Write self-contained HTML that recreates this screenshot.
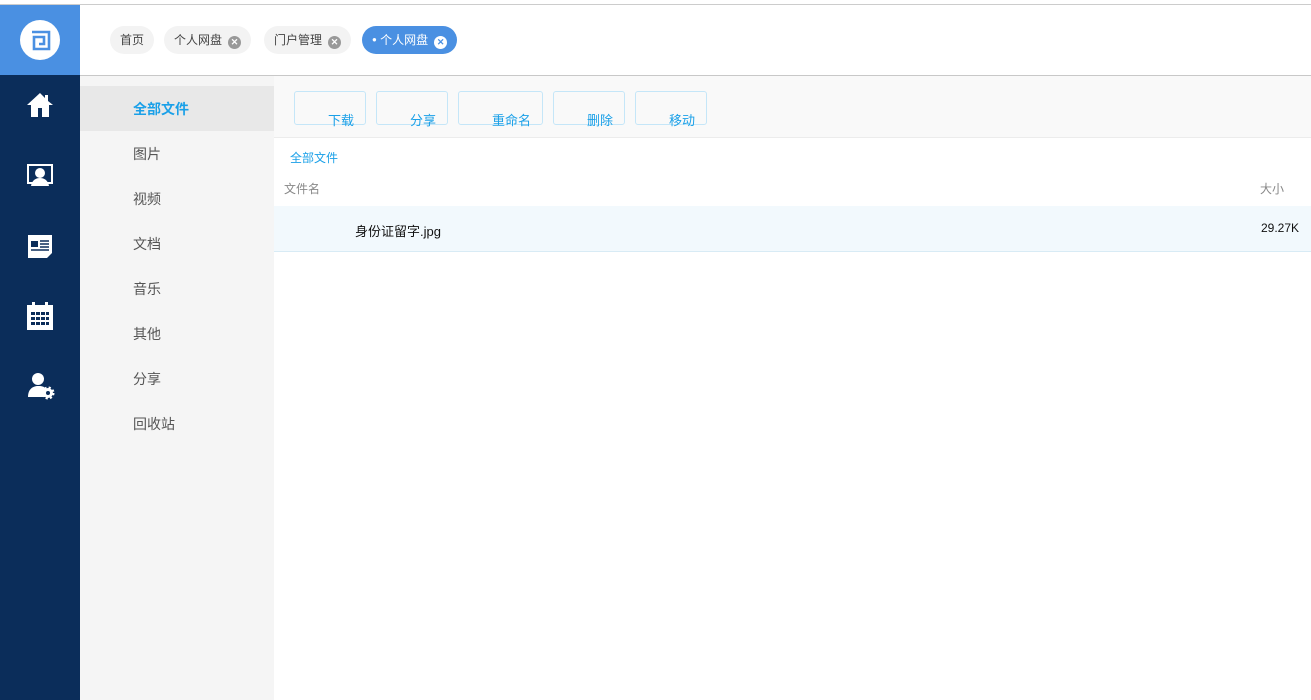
<!DOCTYPE html>
<html><head><meta charset="utf-8"><style>
*{margin:0;padding:0;box-sizing:border-box}
body{width:1311px;height:700px;overflow:hidden;background:#fff;font-family:"Liberation Sans","Noto Sans CJK SC",sans-serif;font-size:13px;position:relative}
.abs{position:absolute}
.topline{left:0;top:4px;width:1311px;height:1px;background:#ccc}
.logo{left:0;top:5px;width:80px;height:70px;background:#4a90e2}
.side{left:0;top:75px;width:80px;height:625px;background:#0b2d5a}
.hdrb{left:80px;top:75px;width:1231px;height:1px;background:#c8c8c8}
.tab{top:26px;height:28px;border-radius:14px;background:#f3f3f3;color:#444;line-height:28px;padding:0 10px;font-size:12px;white-space:nowrap}
.x{display:inline-block;width:13px;height:13px;border-radius:50%;background:#999;color:#fff;font-size:9px;line-height:13px;text-align:center;margin-left:6px;vertical-align:-1px;font-weight:bold}
.menu{left:80px;top:76px;width:194px;height:624px;background:#f5f5f5}
.mi{left:80px;width:194px;height:45px;line-height:47px;padding-left:53px;color:#555;font-size:14px}
.tb{left:274px;top:76px;width:1037px;height:62px;background:#f9f9f9;border-bottom:1px solid #ececec}
.btn{top:91px;height:34px;border:1px solid #c5e6f8;border-radius:3px;color:#1aa0e8;font-size:13px;padding-left:33px;padding-top:20px;line-height:17px}
</style></head><body>
<div class="abs topline"></div>
<div class="abs logo"><div style="position:absolute;left:20px;top:15px;width:40px;height:40px;border-radius:50%;background:#fff">
<svg width="40" height="40" viewBox="0 0 40 40"><path d="M12 12h17v17H14v-12h10v7h-5" fill="none" stroke="#4a90e2" stroke-width="2.6"/></svg></div></div>
<div class="abs side">
<svg class="abs" style="left:26px;top:16px" width="28" height="28" viewBox="0 0 28 28"><path d="M14 2L1 14h4v12h7v-9h4v9h7V14h4L22 10V4h-3v3z" fill="#fff"/></svg>
<svg class="abs" style="left:26px;top:87px" width="28" height="28" viewBox="0 0 28 28"><rect x="1" y="2" width="26" height="20" fill="#fff"/><rect x="3" y="4" width="22" height="16" fill="#0b2d5a"/><circle cx="14" cy="11" r="5" fill="#fff"/><path d="M5 24c1-6 5-8 9-8s8 2 9 8z" fill="#fff"/></svg>
<svg class="abs" style="left:27px;top:157px" width="26" height="28" viewBox="0 0 26 28"><path d="M1 3h24v18l-5 5H1z" fill="#fff"/><rect x="4" y="9" width="7" height="6" fill="#0b2d5a"/><path d="M13 9h9M13 12h9M13 15h9M4 18h18" stroke="#0b2d5a" stroke-width="1.5"/></svg>
<svg class="abs" style="left:26px;top:226px" width="28" height="30" viewBox="0 0 28 30"><rect x="1" y="4" width="26" height="25" fill="#fff"/><rect x="6" y="1" width="3" height="6" fill="#fff"/><rect x="19" y="1" width="3" height="6" fill="#fff"/><g fill="#0b2d5a"><rect x="5" y="11" width="4" height="3"/><rect x="10" y="11" width="4" height="3"/><rect x="15" y="11" width="4" height="3"/><rect x="20" y="11" width="3" height="3"/><rect x="5" y="16" width="4" height="3"/><rect x="10" y="16" width="4" height="3"/><rect x="15" y="16" width="4" height="3"/><rect x="20" y="16" width="3" height="3"/><rect x="5" y="21" width="4" height="3"/><rect x="10" y="21" width="4" height="3"/><rect x="15" y="21" width="4" height="3"/><rect x="20" y="21" width="3" height="3"/></g></svg>
<svg class="abs" style="left:27px;top:297px" width="28" height="28" viewBox="0 0 28 28"><circle cx="11" cy="7" r="6" fill="#fff"/><path d="M1 25c0-8 5-11 10-11s6 1 7 2v9z" fill="#fff"/><circle cx="21" cy="21" r="5" fill="#fff" stroke="#fff" stroke-width="3" stroke-dasharray="2 2"/><circle cx="21" cy="21" r="2" fill="#0b2d5a"/></svg>
</div>
<div class="abs hdrb"></div>
<div class="abs tab" style="left:110px">首页</div>
<div class="abs tab" style="left:164px">个人网盘<span class="x">✕</span></div>
<div class="abs tab" style="left:264px">门户管理<span class="x">✕</span></div>
<div class="abs tab" style="left:362px;background:#4a90e2;color:#fff"><span style="font-size:8px;vertical-align:2px">●</span> 个人网盘<span class="x" style="background:#fff;color:#4a90e2">✕</span></div>
<div class="abs menu"></div>
<div class="abs mi" style="top:86px;background:#e8e8e8;color:#1aa0e8;font-weight:bold">全部文件</div>
<div class="abs mi" style="top:131px">图片</div>
<div class="abs mi" style="top:176px">视频</div>
<div class="abs mi" style="top:221px">文档</div>
<div class="abs mi" style="top:266px">音乐</div>
<div class="abs mi" style="top:311px">其他</div>
<div class="abs mi" style="top:356px">分享</div>
<div class="abs mi" style="top:401px">回收站</div>
<div class="abs tb"></div>
<div class="abs btn" style="left:294px;width:72px">下载</div>
<div class="abs btn" style="left:376px;width:72px">分享</div>
<div class="abs btn" style="left:458px;width:85px">重命名</div>
<div class="abs btn" style="left:553px;width:72px">删除</div>
<div class="abs btn" style="left:635px;width:72px">移动</div>
<div class="abs" style="left:290px;top:149px;color:#1aa0e8;font-size:12px">全部文件</div>
<div class="abs" style="left:284px;top:180px;color:#888;font-size:12px">文件名</div>
<div class="abs" style="left:1260px;top:180px;color:#888;font-size:12px">大小</div>
<div class="abs" style="left:274px;top:206px;width:1037px;height:46px;background:#f2f9fd;border-bottom:1px solid #d8ebf5"></div>
<div class="abs" style="left:355px;top:221px;color:#111">身份证留字.jpg</div>
<div class="abs" style="left:1261px;top:221px;color:#111;font-size:12px">29.27K</div>
</body></html>
